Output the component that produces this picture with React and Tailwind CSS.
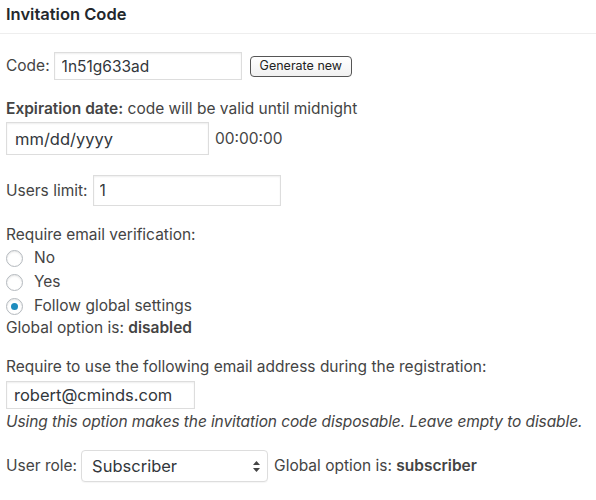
import React from 'react';

function Radio({ label, checked }) {
  return (
    <label className="flex items-center gap-[11px] h-6">
      <span className="w-[17px] h-[17px] rounded-full border border-[#b4b9be] bg-white shadow-[inset_0_1px_2px_rgba(0,0,0,0.1)] flex items-center justify-center">
        {checked && <span className="w-[7px] h-[7px] rounded-full bg-[#1e8cbe]" />}
      </span>
      <span>{label}</span>
    </label>
  );
}

const inputCls = 'border border-[#ddd] shadow-[inset_0_1px_2px_rgba(0,0,0,0.07)] text-[#32373c] outline-none bg-white';

export default function App() {
  return (
    <div className="w-[596px] h-[500px] bg-white text-[15.5px] leading-[20px] text-[#444] overflow-hidden" style={{ fontFamily: 'Inter, "Liberation Sans", Arial, sans-serif' }}>
      <div className="h-[34px] border-b border-[#eee] px-[6px] pt-[4px]">
        <h2 className="font-semibold text-[#23282d] text-[16.5px]">Invitation Code</h2>
      </div>

      <div className="px-[6px]">
        {/* Code */}
        <div className="flex items-center mt-[18px] h-[28px]">
          <span className="mr-[4px]">Code:</span>
          <input readOnly value="1n51g633ad" className={`${inputCls} w-[188px] h-[28px] px-[7px] text-[15.5px]`} />
          <button className="ml-[8px] h-[21px] px-[9px] border border-[#555] rounded-[4px] bg-gradient-to-b from-white to-[#f1f1f1] text-[12.5px] text-[#222] leading-none">Generate new</button>
        </div>

        {/* Expiration */}
        <div className="mt-[19px]">
          <span className="font-semibold">Expiration date:</span> code will be valid until midnight
        </div>
        <div className="flex items-center mt-[3px]">
          <input readOnly value="mm/dd/yyyy" className={`${inputCls} w-[203px] h-[33px] px-[8px] text-[16.5px]`} />
          <span className="ml-[6px]">00:00:00</span>
        </div>

        {/* Users limit */}
        <div className="flex items-center mt-[20px]">
          <span className="mr-[5px]">Users limit:</span>
          <input readOnly value="1" className={`${inputCls} w-[188px] h-[31px] px-[6px] text-[15.5px]`} />
        </div>

        {/* Email verification */}
        <div className="mt-[19px]">Require email verification:</div>
        <div className="mt-[1px]">
          <Radio label="No" />
          <Radio label="Yes" />
          <Radio label="Follow global settings" checked />
        </div>
        <div>Global option is: <span className="font-semibold">disabled</span></div>

        {/* Email address */}
        <div className="mt-[19px]">Require to use the following email address during the registration:</div>
        <input readOnly value="robert@cminds.com" className={`${inputCls} mt-[4px] w-[189px] h-[28px] px-[7px] block text-[16.5px]`} />
        <div className="italic mt-[3px] tracking-[-0.1px]">Using this option makes the invitation code disposable. Leave empty to disable.</div>

        {/* User role */}
        <div className="flex items-center mt-[18px]">
          <span className="mr-[4px]">User role:</span>
          <div className="relative w-[187px] h-[32px] border border-[#ddd] rounded-[4px] bg-white shadow-[0_1px_1px_rgba(0,0,0,0.04)] flex items-center px-[10px] text-[#32373c] text-[16.5px]">
            Subscriber
            <svg className="absolute right-[7px] top-[10px]" width="7" height="11" viewBox="0 0 7 11">
              <path d="M3.5 0 L7 4 L0 4 Z" fill="#444" />
              <path d="M3.5 11 L7 7 L0 7 Z" fill="#444" />
            </svg>
          </div>
          <span className="ml-[6px]">Global option is: <span className="font-semibold">subscriber</span></span>
        </div>
      </div>
    </div>
  );
}
